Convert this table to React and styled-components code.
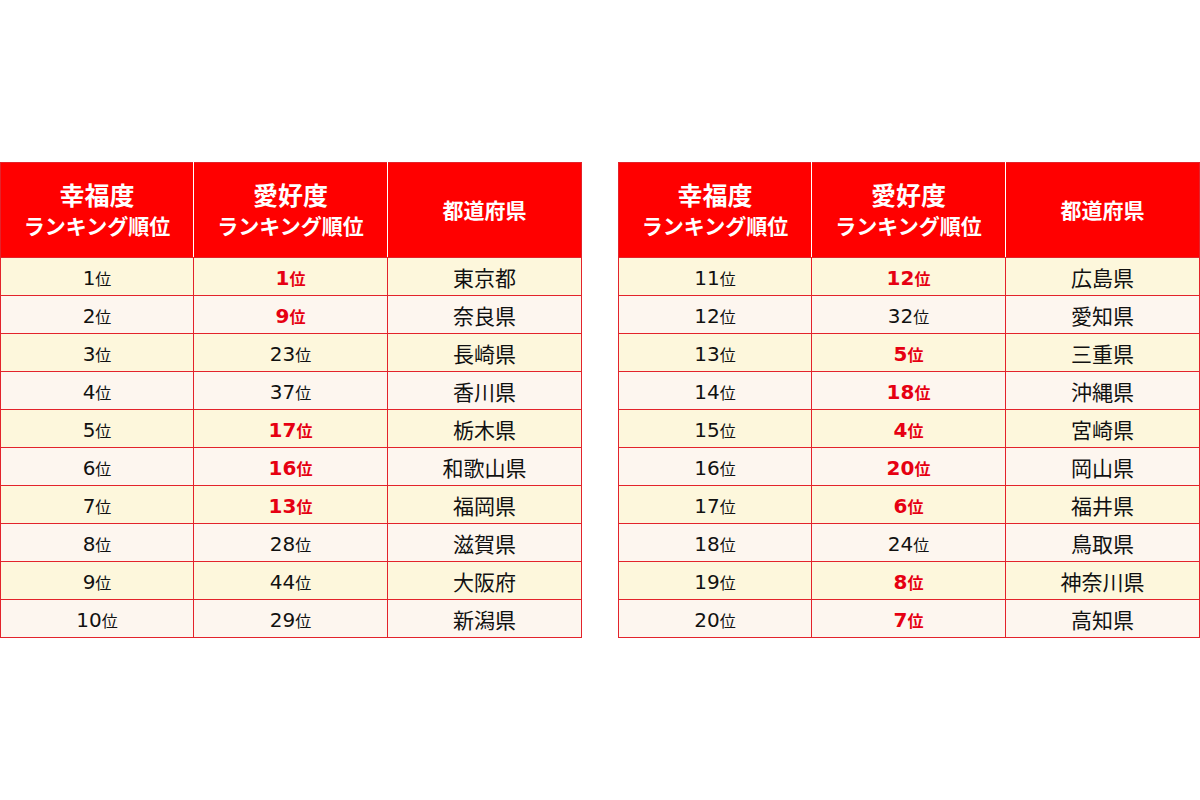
import React from 'react';
import styled, { createGlobalStyle } from 'styled-components';

const GlobalStyle = createGlobalStyle`
  html, body {
    margin: 0;
    padding: 0;
    background: #ffffff;
  }
  body {
    font-family: "Noto Sans CJK JP", "Noto Sans", sans-serif;
  }
`;

const left = [
  ['1', '1', true, '東京都'],
  ['2', '9', true, '奈良県'],
  ['3', '23', false, '長崎県'],
  ['4', '37', false, '香川県'],
  ['5', '17', true, '栃木県'],
  ['6', '16', true, '和歌山県'],
  ['7', '13', true, '福岡県'],
  ['8', '28', false, '滋賀県'],
  ['9', '44', false, '大阪府'],
  ['10', '29', false, '新潟県'],
];

const right = [
  ['11', '12', true, '広島県'],
  ['12', '32', false, '愛知県'],
  ['13', '5', true, '三重県'],
  ['14', '18', true, '沖縄県'],
  ['15', '4', true, '宮崎県'],
  ['16', '20', true, '岡山県'],
  ['17', '6', true, '福井県'],
  ['18', '24', false, '鳥取県'],
  ['19', '8', true, '神奈川県'],
  ['20', '7', true, '高知県'],
];

const Page = styled.div`
  width: 1200px;
  height: 800px;
  display: flex;
  justify-content: space-between;
  align-items: flex-start;
  padding-top: 162px;
  box-sizing: border-box;
`;

const Table = styled.table`
  width: 581px;
  border-collapse: collapse;
  table-layout: fixed;
  border: 1px solid #e3232b;
`;

const HeadCell = styled.th`
  height: 91px;
  padding: 0 0 3px;
  background: #ff0000;
  color: #ffffff;
  font-weight: 700;
  text-align: center;
  vertical-align: middle;
  border-left: 1px solid #ffffff;
  border-bottom: 1px solid #e3232b;
  &:first-child {
    border-left: 1px solid #e3232b;
  }
`;

const Big = styled.div`
  font-size: 25px;
  line-height: 32px;
`;

const Small = styled.div`
  font-size: 21px;
  line-height: 30px;
`;

const Row = styled.tr`
  background: ${(p) => (p.$odd ? '#fdf7dc' : '#fdf6ef')};
`;

const Cell = styled.td`
  height: 37px;
  padding: 0;
  text-align: center;
  vertical-align: middle;
  border: 1px solid #e3232b;
  color: #111111;
  font-size: 21px;
  line-height: 26px;
`;

const Num = styled.span`
  font-family: "DejaVu Sans", "Noto Sans CJK JP", sans-serif;
  font-size: 20px;
  font-weight: ${(p) => (p.$red ? 700 : 400)};
  color: ${(p) => (p.$red ? '#e60012' : '#111111')};
`;

const Unit = styled.span`
  font-size: 16px;
  font-weight: ${(p) => (p.$red ? 700 : 400)};
  color: ${(p) => (p.$red ? '#e60012' : '#111111')};
`;

const Rank = ({ n, red }) => (
  <>
    <Num $red={red}>{n}</Num>
    <Unit $red={red}>位</Unit>
  </>
);

const RankTable = ({ rows }) => (
  <Table>
    <colgroup>
      <col style={{ width: 193 }} />
      <col style={{ width: 194 }} />
      <col style={{ width: 194 }} />
    </colgroup>
    <thead>
      <tr>
        <HeadCell>
          <Big>幸福度</Big>
          <Small>ランキング順位</Small>
        </HeadCell>
        <HeadCell>
          <Big>愛好度</Big>
          <Small>ランキング順位</Small>
        </HeadCell>
        <HeadCell>
          <Small>都道府県</Small>
        </HeadCell>
      </tr>
    </thead>
    <tbody>
      {rows.map(([a, b, red, pref], i) => (
        <Row key={pref} $odd={i % 2 === 0}>
          <Cell>
            <Rank n={a} />
          </Cell>
          <Cell>
            <Rank n={b} red={red} />
          </Cell>
          <Cell>{pref}</Cell>
        </Row>
      ))}
    </tbody>
  </Table>
);

export default function App() {
  return (
    <>
      <GlobalStyle />
      <Page>
        <RankTable rows={left} />
        <RankTable rows={right} />
      </Page>
    </>
  );
}
